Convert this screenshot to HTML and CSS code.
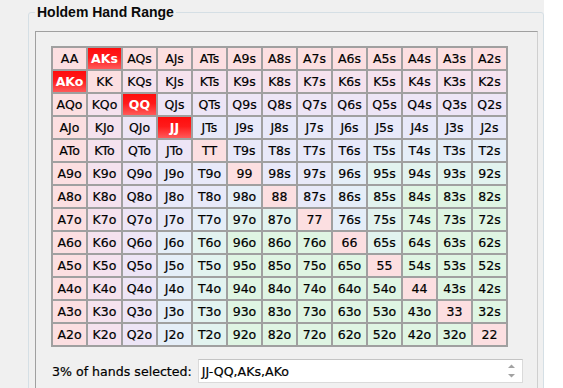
FILE: index.html
```html
<!DOCTYPE html>
<html>
<head>
<meta charset="utf-8">
<link rel="stylesheet" href="styles.css">
</head>
<body>
<div class="window">
  <fieldset class="group">
    <legend class="group-title">Holdem Hand Range</legend>
    <div class="panel">
      <div class="grid">
        <div class="cell t0">AA</div><div class="cell sel">AKs</div><div class="cell t0">AQs</div><div class="cell t0">AJs</div><div class="cell t0">ATs</div><div class="cell t0">A9s</div><div class="cell t0">A8s</div><div class="cell t0">A7s</div><div class="cell t0">A6s</div><div class="cell t0">A5s</div><div class="cell t0">A4s</div><div class="cell t0">A3s</div><div class="cell t0">A2s</div>
        <div class="cell sel">AKo</div><div class="cell t0">KK</div><div class="cell t1">KQs</div><div class="cell t1">KJs</div><div class="cell t1">KTs</div><div class="cell t1">K9s</div><div class="cell t1">K8s</div><div class="cell t1">K7s</div><div class="cell t1">K6s</div><div class="cell t1">K5s</div><div class="cell t1">K4s</div><div class="cell t1">K3s</div><div class="cell t1">K2s</div>
        <div class="cell t0">AQo</div><div class="cell t1">KQo</div><div class="cell sel">QQ</div><div class="cell t2">QJs</div><div class="cell t2">QTs</div><div class="cell t2">Q9s</div><div class="cell t2">Q8s</div><div class="cell t2">Q7s</div><div class="cell t2">Q6s</div><div class="cell t2">Q5s</div><div class="cell t2">Q4s</div><div class="cell t2">Q3s</div><div class="cell t2">Q2s</div>
        <div class="cell t0">AJo</div><div class="cell t1">KJo</div><div class="cell t2">QJo</div><div class="cell sel">JJ</div><div class="cell t3">JTs</div><div class="cell t3">J9s</div><div class="cell t3">J8s</div><div class="cell t3">J7s</div><div class="cell t3">J6s</div><div class="cell t3">J5s</div><div class="cell t3">J4s</div><div class="cell t3">J3s</div><div class="cell t3">J2s</div>
        <div class="cell t0">ATo</div><div class="cell t1">KTo</div><div class="cell t2">QTo</div><div class="cell t2">JTo</div><div class="cell t0">TT</div><div class="cell t3">T9s</div><div class="cell t3">T8s</div><div class="cell t3">T7s</div><div class="cell t3">T6s</div><div class="cell t4">T5s</div><div class="cell t4">T4s</div><div class="cell t4">T3s</div><div class="cell t4">T2s</div>
        <div class="cell t0">A9o</div><div class="cell t1">K9o</div><div class="cell t2">Q9o</div><div class="cell t3">J9o</div><div class="cell t3">T9o</div><div class="cell t0">99</div><div class="cell t3">98s</div><div class="cell t3">97s</div><div class="cell t4">96s</div><div class="cell t5">95s</div><div class="cell t5">94s</div><div class="cell t5">93s</div><div class="cell t5">92s</div>
        <div class="cell t0">A8o</div><div class="cell t1">K8o</div><div class="cell t2">Q8o</div><div class="cell t3">J8o</div><div class="cell t3">T8o</div><div class="cell t4">98o</div><div class="cell t0">88</div><div class="cell t3">87s</div><div class="cell t4">86s</div><div class="cell t5">85s</div><div class="cell t6">84s</div><div class="cell t6">83s</div><div class="cell t6">82s</div>
        <div class="cell t0">A7o</div><div class="cell t1">K7o</div><div class="cell t2">Q7o</div><div class="cell t3">J7o</div><div class="cell t4">T7o</div><div class="cell t5">97o</div><div class="cell t5">87o</div><div class="cell t0">77</div><div class="cell t4">76s</div><div class="cell t5">75s</div><div class="cell t6">74s</div><div class="cell t6">73s</div><div class="cell t6">72s</div>
        <div class="cell t0">A6o</div><div class="cell t1">K6o</div><div class="cell t2">Q6o</div><div class="cell t4">J6o</div><div class="cell t5">T6o</div><div class="cell t6">96o</div><div class="cell t6">86o</div><div class="cell t6">76o</div><div class="cell t0">66</div><div class="cell t5">65s</div><div class="cell t6">64s</div><div class="cell t6">63s</div><div class="cell t6">62s</div>
        <div class="cell t0">A5o</div><div class="cell t1">K5o</div><div class="cell t2">Q5o</div><div class="cell t4">J5o</div><div class="cell t5">T5o</div><div class="cell t6">95o</div><div class="cell t6">85o</div><div class="cell t6">75o</div><div class="cell t6">65o</div><div class="cell t0">55</div><div class="cell t6">54s</div><div class="cell t6">53s</div><div class="cell t6">52s</div>
        <div class="cell t0">A4o</div><div class="cell t1">K4o</div><div class="cell t2">Q4o</div><div class="cell t4">J4o</div><div class="cell t5">T4o</div><div class="cell t6">94o</div><div class="cell t6">84o</div><div class="cell t6">74o</div><div class="cell t6">64o</div><div class="cell t6">54o</div><div class="cell t0">44</div><div class="cell t6">43s</div><div class="cell t6">42s</div>
        <div class="cell t0">A3o</div><div class="cell t1">K3o</div><div class="cell t2">Q3o</div><div class="cell t4">J3o</div><div class="cell t5">T3o</div><div class="cell t6">93o</div><div class="cell t6">83o</div><div class="cell t6">73o</div><div class="cell t6">63o</div><div class="cell t6">53o</div><div class="cell t6">43o</div><div class="cell t0">33</div><div class="cell t6">32s</div>
        <div class="cell t0">A2o</div><div class="cell t1">K2o</div><div class="cell t2">Q2o</div><div class="cell t4">J2o</div><div class="cell t5">T2o</div><div class="cell t6">92o</div><div class="cell t6">82o</div><div class="cell t6">72o</div><div class="cell t6">62o</div><div class="cell t6">52o</div><div class="cell t6">42o</div><div class="cell t6">32o</div><div class="cell t0">22</div>
      </div>
      <div class="selection">
        <span class="selection-label">3% of hands selected:</span>
        <div class="spinbox">
          <span class="spinbox-text">JJ-QQ,AKs,AKo</span>
          <span class="spin">
            <svg width="9" height="18" viewBox="0 0 9 18"><path d="M1 6 L4.5 2.5 L8 6 Z" fill="#a2a2a2"/><path d="M1 12 L4.5 15.5 L8 12 Z" fill="#a2a2a2"/></svg>
          </span>
        </div>
      </div>
    </div>
  </fieldset>
</div>
</body>
</html>
```

FILE: styles.css
```css
html, body {
  margin: 0;
  background: #ffffff;
}

.window {
  width: 544px;
  height: 388px;
  box-sizing: border-box;
  padding: 4px 0 0 28px;
  background: #f0f0f0;
  overflow: hidden;
  font-family: "DejaVu Sans", Tahoma, sans-serif;
  color: #000;
}

.group {
  margin: 0;
  padding: 11px 5px 0 6px;
  border: 1px solid #d5dfe5;
  border-radius: 3px;
  height: 420px;
  box-sizing: border-box;
  min-width: 0;
}

.group-title {
  padding: 0 2px;
  font: bold 14px/16px "Liberation Sans", Arial, sans-serif;
  color: #0a0a0a;
}

.panel {
  height: 420px;
  box-sizing: border-box;
  padding: 14px 0 0 15px;
  border: 1px solid #a0a0a0;
  border-right-color: #cfcfcf;
  border-bottom: none;
}

.grid {
  display: grid;
  grid-template-columns: repeat(13, 33px);
  grid-auto-rows: 21px;
  gap: 2px;
  padding: 2px;
  width: max-content;
  background: #a0a0a0;
}

.cell {
  display: flex;
  align-items: center;
  justify-content: center;
  font-size: 12.5px;
  color: #000;
  -webkit-text-stroke: 0.2px #000;
}

.t0 { background: #fcdfe1; }
.t1 { background: #f5e2ee; }
.t2 { background: #ede5f6; }
.t3 { background: #e8e9f9; }
.t4 { background: #e5eef8; }
.t5 { background: #e2f3ef; }
.t6 { background: #dff5e3; }

.sel {
  background: linear-gradient(to bottom, #ff0d0d 0%, #ff1a1a 45%, #ff5a5a 100%);
  color: #ffffff;
  font-weight: bold;
  -webkit-text-stroke: 0;
}

.selection {
  display: flex;
  align-items: center;
  gap: 6px;
  margin-top: 12px;
  padding-left: 1px;
  font-size: 12.6px;
  -webkit-text-stroke: 0.2px #000;
}

.spinbox {
  display: flex;
  align-items: center;
  width: 325px;
  height: 24px;
  box-sizing: border-box;
  padding-left: 3px;
  background: #ffffff;
  border: 1px solid #dadada;
  border-top-color: #c4c4c4;
}

.spinbox-text {
  flex: 1;
}

.spin {
  display: flex;
  align-items: center;
  justify-content: center;
  width: 17px;
  height: 22px;
  margin-right: 2px;
  -webkit-text-stroke: 0;
}

.spin svg {
  display: block;
}
```
